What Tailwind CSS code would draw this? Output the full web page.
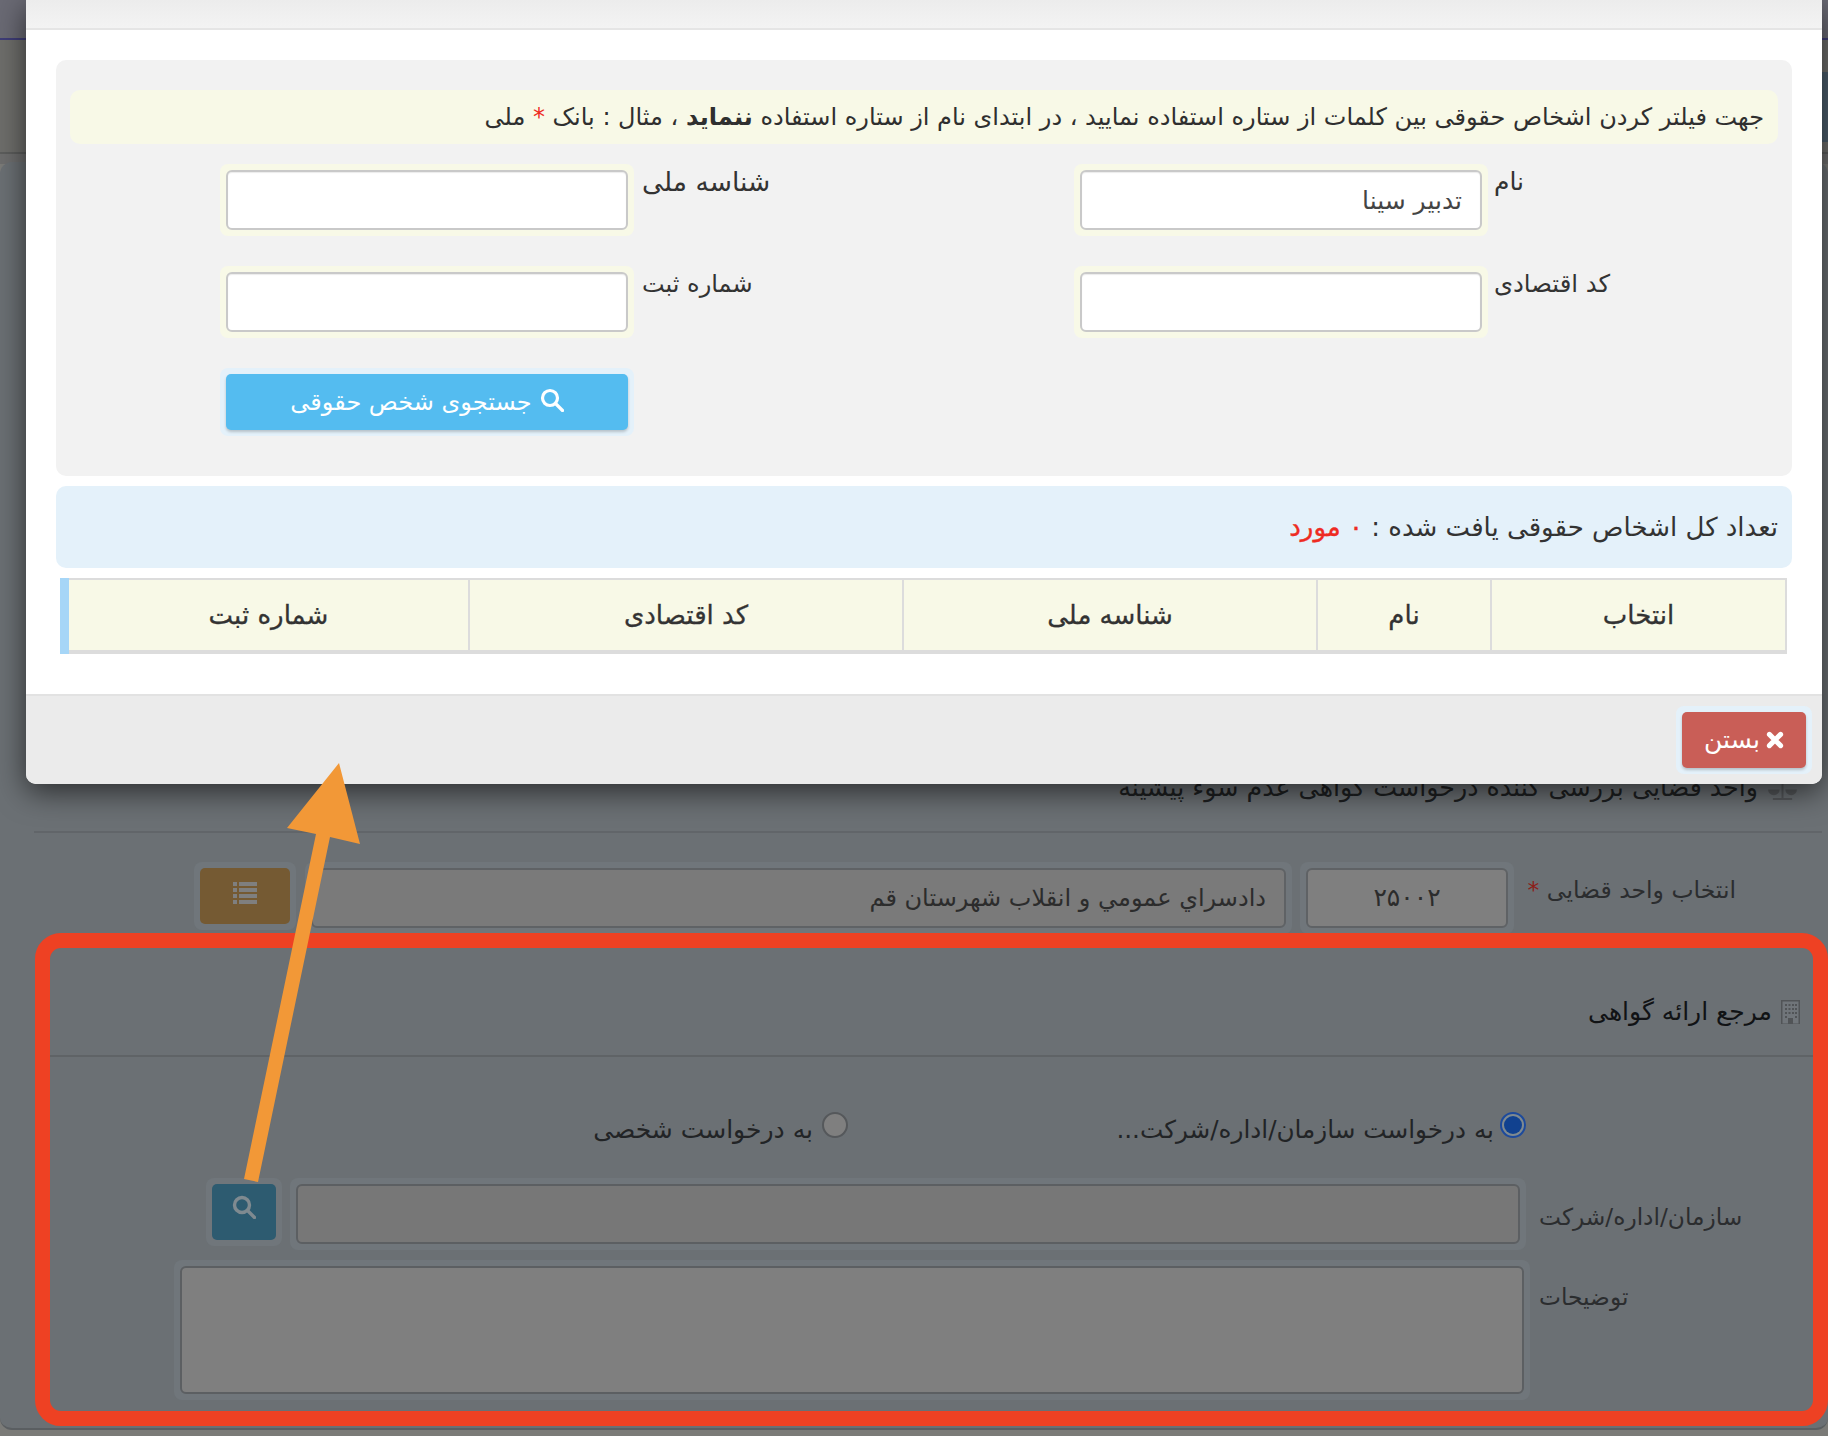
<!DOCTYPE html>
<html lang="fa" dir="rtl">
<head>
  <meta charset="UTF-8" />
  <title>مرجع ارائه گواهی</title>
  <script src="https://cdn.jsdelivr.net/npm/@tailwindcss/browser@4"></script>
</head>
<body class="relative w-[1828px] h-[1436px] overflow-hidden bg-[#7b7b78] font-['DejaVu_Sans',sans-serif] text-[25px] leading-[30px] text-[#333]">

  <!-- page under the modal -->
  <div class="absolute left-0 top-0 w-full h-[38px] bg-[#6a6a74] border-b-2 border-[#3f3d78] box-content"></div>
  <div class="absolute left-0 top-[40px] w-full h-[114px] bg-[#6e6e6b] border-b-2 border-[#5c5d5c]"></div>
  <div class="absolute left-0 top-[154px] w-full h-[10px] bg-[#6e6e6e]"></div>
  <div class="absolute right-0 top-[72px] w-[6px] h-[70px] bg-[#4b5d6b]"></div>
  <div class="absolute left-0 top-[162px] w-full h-[1268px] bg-[#6b7074] rounded-[12px] border-b-2 border-[#5a5e61]"></div>

  <section class="absolute left-[34px] top-[740px] w-[1788px] h-[190px]">
    <div class="h-[93px] border-b-2 border-[#616569]">
      <h3 class="absolute right-[25px] top-[33px] flex items-center gap-[10px] text-[25.300px] text-[#1d1f21]">
        <svg viewBox="0 0 30 26" class="w-[29px] h-[25px] text-[#55585b]" fill="currentColor"><path d="M0 14h12a6 6 0 0 1-12 0zM18 14h12a6 6 0 0 1-12 0z"/><path d="M14 2h2v21h-2zM5 23h20v2H5zM5 4h20v1.500H5z"/></svg>
        واحد قضایی بررسی کننده درخواست گواهی عدم سوء پیشینه
      </h3>
    </div>
    <div class="flex items-start pt-[29px] pr-[86px]">
      <label class="w-[222px] text-[23.500px] text-[#2b2d2f] pt-[13px] whitespace-nowrap">انتخاب واحد قضایی <span class="text-[#8c1f1a]">*</span></label>
      <div class="bg-[#70767b] rounded-[8px] p-[6px] w-[214px] h-[72px]">
        <div class="h-[60px] bg-[#7f7f7f] border-2 border-[#5f6265] rounded-[6px] flex items-center justify-center text-[#2c2c2c]">۲۵۰۰۲</div>
      </div>
      <div class="mr-[8px] bg-[#70767b] rounded-[8px] p-[6px] w-[987px] h-[72px]">
        <div class="h-[60px] bg-[#7a7a7a] border-2 border-[#5f6265] rounded-[6px] flex items-center px-[18px] text-[24px] text-[#2c2c2c]">دادسراي عمومي و انقلاب شهرستان قم</div>
      </div>
      <div class="mr-[9px] bg-[#70767b] rounded-[8px] p-[6px] w-[102px] h-[68px]">
        <button class="w-[90px] h-[56px] bg-[#755a33] rounded-[5px] flex justify-center pt-[14px] text-[#7f7f7f]">
          <svg viewBox="0 0 24 22" class="w-[24px] h-[22px]" fill="currentColor"><path d="M0 0h4v4H0zM6 0h18v4H6zM0 6h4v4H0zM6 6h18v4H6zM0 12h4v4H0zM6 12h18v4H6zM0 18h4v4H0zM6 18h18v4H6z"/></svg>
        </button>
      </div>
    </div>
  </section>

  <!-- highlighted section with the red frame -->
  <section class="absolute left-[35px] top-[933px] w-[1793px] h-[493px] border-[15px] border-[#ee4123] rounded-[26px]">
    <div class="h-[109px] border-b-2 border-[#5f6366] flex items-center gap-[9px] pr-[13px] pt-[20px] text-[25px] text-[#111315]">
      <svg viewBox="0 0 19 24" class="w-[19px] h-[24px] text-[#515457]" fill="currentColor"><path d="M0 0h19v24H0z"/><path d="M1.500 1.500h16v22h-16z" fill="#70757a"/><path d="M4 4h2v2H4zM7.500 4h2v2h-2zM11 4h2v2h-2zM14 4h2v2h-2zM4 8h2v2H4zM7.500 8h2v2h-2zM11 8h2v2h-2zM14 8h2v2h-2zM4 12h2v2H4zM7.500 12h2v2h-2zM11 12h2v2h-2zM14 12h2v2h-2zM4 16h2v2H4zM14 16h2v2h-2zM7 18h5v6H7z"/></svg>
      مرجع ارائه گواهی
    </div>
    <div class="flex pr-[287px] pt-[55px] h-[121px]">
      <label class="w-[678px] flex items-start gap-[6px] text-[24.700px] text-[#222426] whitespace-nowrap">
        <span class="w-[26px] h-[26px] rounded-full border-2 border-[#1d4a9c] bg-[#7f8a90] flex items-center justify-center"><span class="w-[18px] h-[18px] rounded-full bg-[#11418f]"></span></span>
        <span class="pt-[3px]">به درخواست سازمان/اداره/شرکت...</span>
      </label>
      <label class="flex items-start gap-[9px] text-[#222426] whitespace-nowrap">
        <span class="w-[26px] h-[26px] rounded-full border-2 border-[#55585b] bg-[#7f7f7f]"></span>
        <span class="pt-[3px]">به درخواست شخصی</span>
      </label>
    </div>
    <div class="flex items-start">
      <label class="w-[287px] pt-[24px] text-left pl-[13px] text-[23.300px] text-[#2b2d2f] whitespace-nowrap">سازمان/اداره/شرکت</label>
      <div class="bg-[#70767b] rounded-[8px] p-[6px] w-[1236px] h-[72px]">
        <div class="h-[60px] bg-[#777] border-2 border-[#5c5f62] rounded-[6px]"></div>
      </div>
      <div class="mr-[8px] bg-[#70767b] rounded-[8px] p-[6px] w-[76px] h-[68px]">
        <button class="w-[64px] h-[56px] bg-[#2d5b70] rounded-[5px] flex justify-center pt-[11px] text-[#7f8a90]">
          <svg viewBox="0 0 24 24" class="w-[24px] h-[24px]" fill="none" stroke="currentColor" stroke-width="3.400"><circle cx="10" cy="10" r="7.500"/><path d="M15.500 15.500l7 7" stroke-linecap="round"/></svg>
        </button>
      </div>
    </div>
    <div class="flex items-start pt-[10px]">
      <label class="w-[283px] pt-[22px] text-left pl-[9px] text-[23.300px] text-[#2b2d2f]">توضیحات</label>
      <div class="bg-[#70767b] rounded-[8px] p-[6px] w-[1356px] h-[140px]">
        <div class="h-[128px] bg-[#7f7f7f] border-2 border-[#5c5f62] rounded-[6px]"></div>
      </div>
    </div>
  </section>

  <!-- modal -->
  <div class="absolute left-[26px] top-0 w-[1796px] h-[784px] bg-white rounded-b-[10px] shadow-[0_8px_30px_rgba(0,0,0,0.6)] flex flex-col">
    <div class="h-[30px] bg-linear-to-b from-[#ececec] to-[#f3f3f3] border-b-2 border-[#e5e5e5] shrink-0"></div>

    <div class="flex-1 px-[30px] pt-[30px]">
      <div class="bg-[#f2f2f2] rounded-[10px] h-[416px] px-[14px] pt-[30px]">
        <div class="h-[54px] bg-[#f8f9e7] rounded-[10px] flex items-center px-[14px] text-[24px] text-[#2f2f2f]">
          <p class="whitespace-nowrap">جهت فیلتر کردن اشخاص حقوقی بین کلمات از ستاره استفاده نمایید ، در ابتدای نام از ستاره استفاده <b class="font-bold">ننماید</b> ، مثال : بانک <span class="text-[#ee2b22]">*</span> ملی</p>
        </div>

        <div class="grid grid-cols-[704px_1fr] mt-[20px]">
          <div class="flex flex-col gap-[30px]">
            <div class="flex items-start">
              <label class="w-[290px] pt-[3px] text-left pl-[6px] whitespace-nowrap">نام</label>
              <div class="bg-[#f8f9e7] rounded-[8px] p-[6px] w-[414px] h-[72px]"><input value="تدبیر سینا" class="w-full h-[60px] bg-white border-2 border-[#c9c9c9] rounded-[6px] shadow-[inset_0_1px_1px_rgba(0,0,0,0.08)] px-[18px] text-[25px] text-[#444]" /></div>
            </div>
            <div class="flex items-start">
              <label class="w-[290px] pt-[3px] text-left pl-[6px] whitespace-nowrap text-[24.300px]">کد اقتصادی</label>
              <div class="bg-[#f8f9e7] rounded-[8px] p-[6px] w-[414px] h-[72px]"><input class="w-full h-[60px] bg-white border-2 border-[#c9c9c9] rounded-[6px] shadow-[inset_0_1px_1px_rgba(0,0,0,0.08)]" /></div>
            </div>
          </div>
          <div class="flex flex-col gap-[30px]">
            <div class="flex items-start">
              <label class="w-[440px] pt-[3px] text-left pl-[8px] whitespace-nowrap text-[26.500px]">شناسه ملی</label>
              <div class="bg-[#f8f9e7] rounded-[8px] p-[6px] w-[414px] h-[72px]"><input class="w-full h-[60px] bg-white border-2 border-[#c9c9c9] rounded-[6px] shadow-[inset_0_1px_1px_rgba(0,0,0,0.08)]" /></div>
            </div>
            <div class="flex items-start">
              <label class="w-[440px] pt-[3px] text-left pl-[8px] whitespace-nowrap text-[24px]">شماره ثبت</label>
              <div class="bg-[#f8f9e7] rounded-[8px] p-[6px] w-[414px] h-[72px]"><input class="w-full h-[60px] bg-white border-2 border-[#c9c9c9] rounded-[6px] shadow-[inset_0_1px_1px_rgba(0,0,0,0.08)]" /></div>
            </div>
            <div class="mr-[440px] bg-[#e4f1fa] rounded-[8px] p-[6px] w-[414px] h-[68px]">
              <button class="w-full h-[56px] bg-[#54bcf0] rounded-[5px] shadow-[0_2px_3px_rgba(0,0,0,0.2)] flex items-center justify-center gap-[8px] text-white text-[24px]">
                <svg viewBox="0 0 24 24" class="w-[24px] h-[24px] -mt-[4px]" fill="none" stroke="currentColor" stroke-width="3.200"><circle cx="10" cy="10" r="7.500"/><path d="M15.500 15.500l7 7" stroke-linecap="round"/></svg>
                جستجوی شخص حقوقی
              </button>
            </div>
          </div>
        </div>
      </div>

      <div class="mt-[10px] h-[82px] bg-[#e4f1fa] rounded-[10px] flex items-center px-[14px] text-[26px]">
        <p>تعداد کل اشخاص حقوقی یافت شده : <span class="text-[#ee2b22] [-webkit-text-stroke:0.4px]">۰ مورد</span></p>
      </div>

      <table class="mt-[10px] mr-[5px] w-[1727px] h-[76px] table-fixed border-collapse border-l-[9px] border-l-[#a6d6f7] border-t-2 border-b-4 border-r-2 border-[#dcdcdc] bg-[#f8f9e7] text-[26px] [-webkit-text-stroke:0.3px]">
        <thead>
          <tr>
            <th class="w-[295px] font-normal border-l-2 border-[#dcdcdc]">انتخاب</th>
            <th class="w-[174px] font-normal border-l-2 border-[#dcdcdc]">نام</th>
            <th class="w-[414px] font-normal border-l-2 border-[#dcdcdc]">شناسه ملی</th>
            <th class="w-[434px] font-normal border-l-2 border-[#dcdcdc]">کد اقتصادی</th>
            <th class="font-normal">شماره ثبت</th>
          </tr>
        </thead>
      </table>
    </div>

    <div class="h-[90px] bg-[#ebebeb] border-t-2 border-[#e2e2e2] rounded-b-[10px] shrink-0 flex items-center px-[10px]">
      <div class="bg-[#e4f1fa] rounded-[8px] p-[6px] w-[136px] h-[68px]">
        <button class="w-[124px] h-[56px] bg-[#c95e57] rounded-[5px] shadow-[0_2px_3px_rgba(0,0,0,0.2)] flex items-center justify-center gap-[6px] text-white text-[25px]">
          <svg viewBox="0 0 16 16" class="w-[18px] h-[18px]" fill="none" stroke="currentColor" stroke-width="4.400" stroke-linecap="round"><path d="M3 3l10 10M13 3L3 13"/></svg>
          بستن
        </button>
      </div>
    </div>
  </div>

  <!-- annotation arrow -->
  <svg class="absolute left-0 top-0 pointer-events-none" width="1828" height="1436" viewBox="0 0 1828 1436">
    <path d="M339 763L360 844L330 837L258 1182L244 1179L316 834L287 828Z" fill="#f29837"/>
  </svg>
</body>
</html>
